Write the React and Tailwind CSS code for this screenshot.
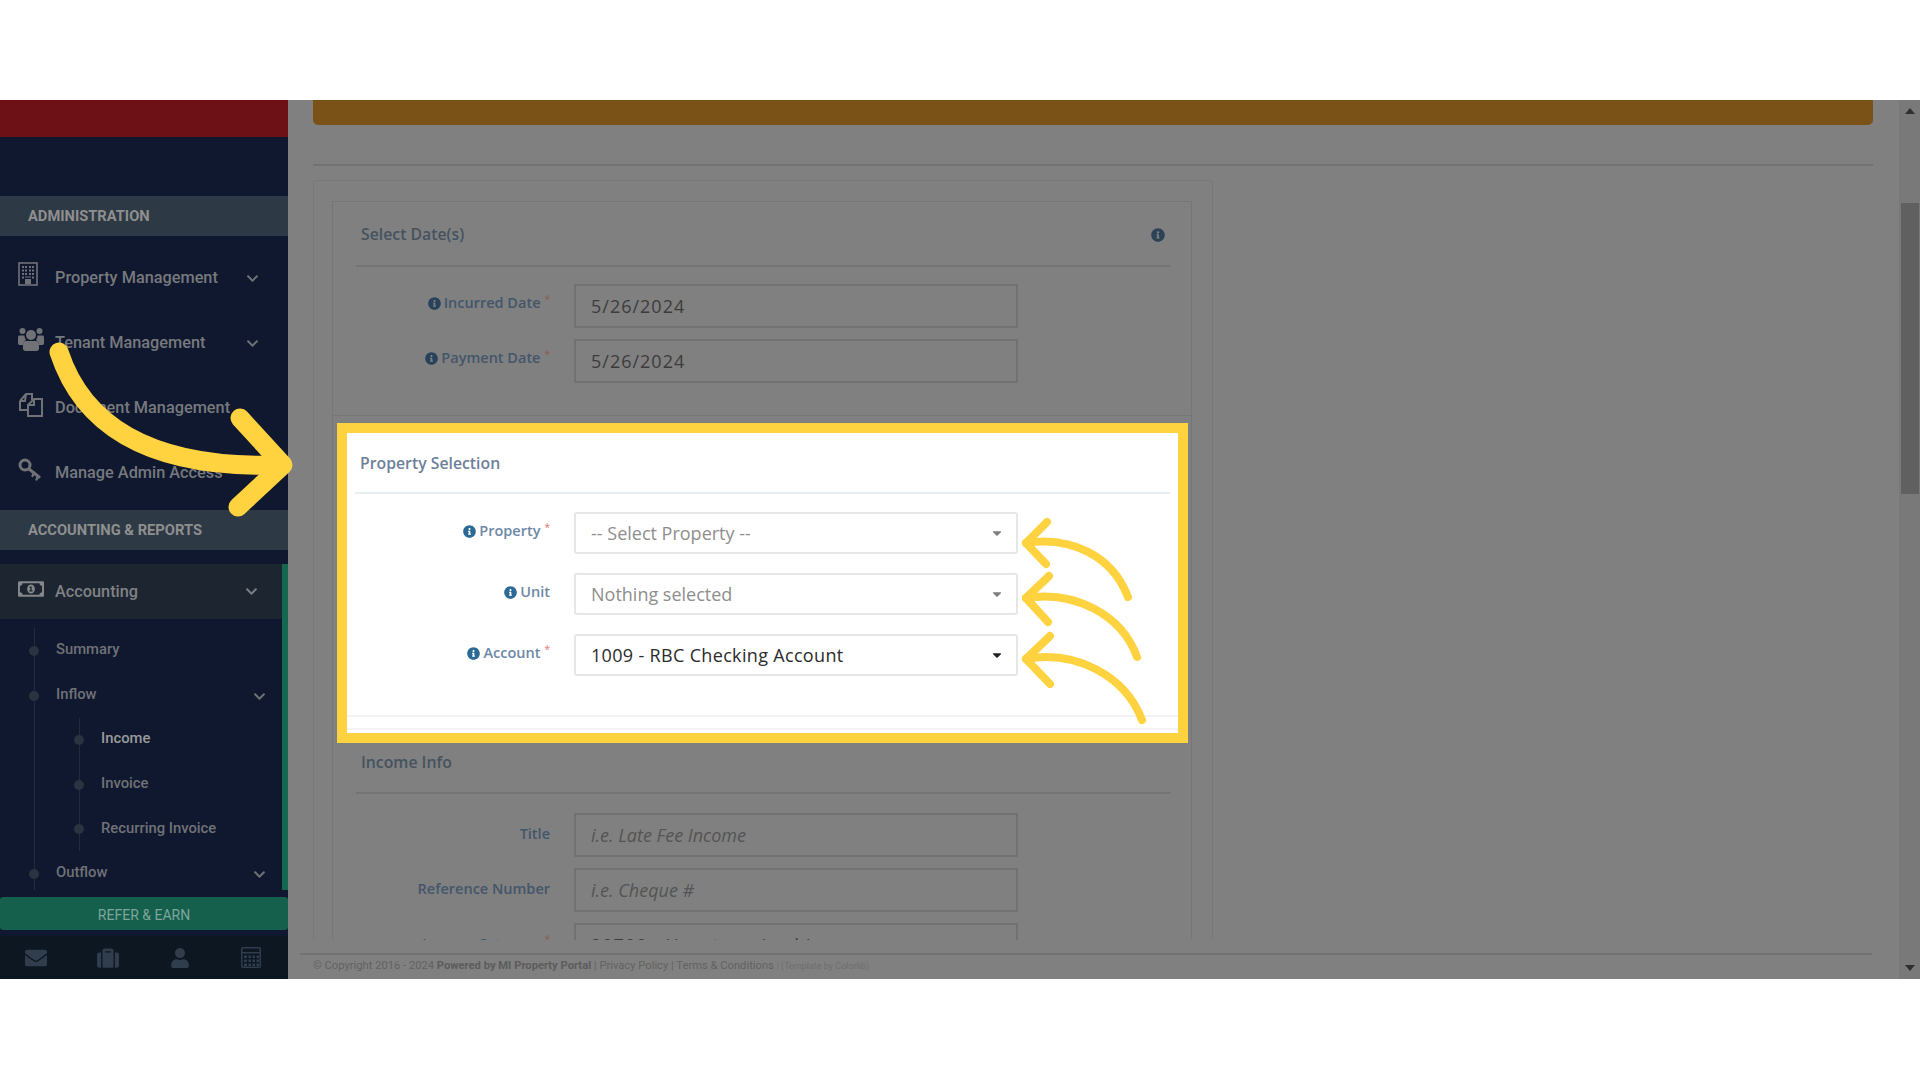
import React from "react";
import {
  FaRegMoneyBillAlt,
  FaChevronDown,
  FaEnvelope,
  FaSuitcase,
  FaUser,
  FaInfoCircle,
  FaCaretDown,
} from "react-icons/fa";

const BuildingIcon = () => (
  <svg width="20" height="24" viewBox="0 0 20 24">
    <rect x="1" y="1" width="18" height="22" fill="none" stroke="currentColor" strokeWidth="1.6" />
    <path d="M4 4h2v2H4zM7 4h2v2H7zM11 4h2v2h-2zM14 4h2v2h-2zM4 7.5h2v2H4zM7 7.5h2v2H7zM11 7.5h2v2h-2zM14 7.5h2v2h-2zM4 11h2v2H4zM7 11h2v2H7zM11 11h2v2h-2zM14 11h2v2h-2zM4 14.5h2v2H4zM14 14.5h2v2h-2zM7 14.5h6v1H7zM7 17h6v5H7z" fill="currentColor" />
  </svg>
);

const UsersIcon = () => (
  <svg width="26" height="25" viewBox="0 0 26 25" fill="currentColor">
    <circle cx="4.5" cy="4" r="3" />
    <circle cx="21.5" cy="4" r="3" />
    <circle cx="13" cy="8" r="5" />
    <path d="M1 8.5h5.5a7 7 0 0 0 1.5 4.5c-2.2 1-3 3-3 5H1.5C.5 18 0 17 0 16v-5c0-1.5.4-2.5 1-2.5zM25 8.5h-5.5a7 7 0 0 1-1.5 4.5c2.2 1 3 3 3 5h3.5c1 0 1.5-1 1.5-2v-5c0-1.5-.4-2.5-1-2.5z" />
    <path d="M7.5 14h11c1.5 0 2.5 1.500 2.500 4v3.500c0 1.500-1 2.500-2.500 2.500h-11C6 24 5 23 5 21.500V18c0-2.500 1-4 2.500-4z" />
  </svg>
);

const FilesIcon = () => (
  <svg width="25" height="25" viewBox="0 0 25 25" fill="none" stroke="currentColor" strokeWidth="2">
    <path d="M2 9 L8 2 H14 V8 M2 9 V18 H9 M2 9 H7 L8 2" />
    <path d="M10 13 L16 7 H24 V24 H10 Z M10 13 H16 V7" />
  </svg>
);

const KeyIcon = () => (
  <svg width="23" height="23" viewBox="0 0 23 23" fill="none" stroke="currentColor" strokeLinecap="round">
    <circle cx="7" cy="7" r="5" strokeWidth="3" />
    <path d="M11 11 L21 19" strokeWidth="3" />
    <path d="M16 15 L14.5 18 M20 18.5 L18.5 21.5" strokeWidth="2.4" />
  </svg>
);

const CalcIcon = () => (
  <svg width="20" height="21" viewBox="0 0 20 21" className="text-[#2f3d4c]">
    <rect x="0.75" y="0.75" width="18.5" height="19.5" rx="1" fill="none" stroke="currentColor" strokeWidth="1.5" />
    <rect x="1" y="5" width="18" height="1.5" fill="currentColor" />
    <path d="M3 8.5h3V11H3zM7.5 8.5H10V11H7.5zM11.5 8.5H14V11h-2.5zM15.5 8.5H18V11h-2.5zM3 12.5h3V15H3zM7.5 12.5H10V15H7.5zM11.5 12.5H14V15h-2.5zM15.5 12.5H18V15h-2.5zM3 16.5h3V19H3zM7.5 16.5H10V19H7.5zM11.5 16.5H14V19h-2.5zM15.5 16.5H18V19h-2.5z" fill="currentColor" />
  </svg>
);

const MenuRow = ({ icon, label, chevron }) => (
  <div className="h-[65px] flex items-center relative pl-[55px] text-[16.3px] font-medium text-[#77797d]">
    <span className="absolute left-[18px] top-[14px] w-[28px] h-[28px] flex items-center text-[#707276]">{icon}</span>
    {label}
    {chevron && <FaChevronDown className="absolute left-[246px] top-[26px] text-[13px] text-[#6e7074]" />}
  </div>
);

const SubRow = ({ label, left, active, chevron }) => (
  <div
    className={`h-[44.6px] flex items-center relative text-[14.8px] font-medium ${active ? "text-[#9a9a9a]" : "text-[#707276]"}`}
    style={{ paddingLeft: left - 1 }}
  >
    <span
      className="absolute top-[19px] w-[10px] h-[10px] rounded-full bg-[#2a3340]"
      style={{ left: left - 28 }}
    />
    {label}
    {chevron && <FaChevronDown className="absolute left-[253px] top-[18px] text-[13px] text-[#6e7074]" />}
  </div>
);

const FormRow = ({ label, info, required, dim, tall, children }) => (
  <div className="flex items-start">
    <div
      className={`w-[194px] ml-[23px] mr-[24px] flex items-center justify-end gap-[3px] text-[14.5px] font-semibold ${tall ? "h-[41px]" : "h-[38px]"} ${dim ? "text-[#43566b]" : "text-[#6d88a6]"}`}
    >
      {info && <FaInfoCircle className={`text-[13px] ${dim ? "text-[#27425a]" : "text-[#2a6a94]"}`} />}
      <span>{label}</span>
      {required && <span className={`text-[10px] -mt-[8px] ml-[1px] font-normal ${dim ? "text-[#8a5a5a]" : "text-[#e2737a]"}`}>*</span>}
    </div>
    {children}
  </div>
);

const DimInput = ({ value, placeholder }) => (
  <div
    className={`w-[444px] h-[44px] border-2 border-[#727272] pl-[15px] flex items-center text-[18px] ${placeholder ? "italic text-[#545454]" : "text-[#3c3c3c] tracking-[1px]"}`}
  >
    {value || placeholder}
  </div>
);

const SelectBox = ({ value, muted }) => (
  <div className={`w-[444px] h-[42px] border-2 border-[#e6e6e6] rounded-[3px] pl-[15px] pr-[12px] flex items-center justify-between text-[18px] ${muted ? "text-[#8e8e8e]" : "text-[#2b2b2b] tracking-[0.33px]"}`}>
    <span>{value}</span>
    <FaCaretDown className={`text-[14px] ${muted ? "text-[#7f7f7f]" : "text-[#222]"}`} />
  </div>
);

export default function App() {
  return (
    <div className="relative w-[1920px] h-[1080px] overflow-hidden bg-white font-['Open_Sans',sans-serif]">
      <div className="h-[100px]" />
      <div className="h-[879px] flex">
        {/* sidebar */}
        <aside className="w-[288px] h-full bg-[#0f182f] flex flex-col font-['Roboto',sans-serif]">
          <div className="h-[37px] bg-[#6e1116]" />
          <div className="h-[59px]" />
          <div className="h-[40px] bg-[#2d3944] flex items-center pl-[28px] text-[14.7px] font-bold text-[#8f8f8f]">ADMINISTRATION</div>
          <div className="mt-[10px]">
            <MenuRow icon={<BuildingIcon />} label="Property Management" chevron />
            <MenuRow icon={<UsersIcon />} label="Tenant Management" chevron />
            <MenuRow icon={<FilesIcon />} label="Document Management" />
            <MenuRow icon={<KeyIcon />} label="Manage Admin Access" />
          </div>
          <div className="mt-[4px] h-[40px] bg-[#2d3944] flex items-center pl-[28px] text-[14.7px] font-bold text-[#8f8f8f]">ACCOUNTING &amp; REPORTS</div>
          <div className="mt-[14px] border-r-[6px] border-[#14684f]">
            <div className="h-[55px] bg-[#1d2530] relative flex items-center pl-[55px] pt-[2px] text-[16.3px] font-medium text-[#808285]">
              <FaRegMoneyBillAlt className="absolute left-[18px] top-[12px] text-[26px] text-[#85878a]" />
              Accounting
              <FaChevronDown className="absolute left-[245px] top-[21px] text-[13px] text-[#7a7c80]" />
            </div>
            <div className="relative h-[271px] pt-[8px]">
              <span className="absolute left-[34px] top-[9px] bottom-0 w-px bg-[#242c3c]" />
              <span className="absolute left-[79px] top-[99px] h-[133px] w-px bg-[#242c3c]" />
              <SubRow label="Summary" left={57} />
              <SubRow label="Inflow" left={57} chevron />
              <SubRow label="Income" left={102} active />
              <SubRow label="Invoice" left={102} />
              <SubRow label="Recurring Invoice" left={102} />
              <SubRow label="Outflow" left={57} chevron />
            </div>
          </div>
          <div className="mt-[7px] h-[33px] rounded-[3px] bg-[#14604d] flex items-center justify-center pt-[3px] text-[14px] text-[#7fa59c]">REFER &amp; EARN</div>
          <div className="mt-[6px] flex-1 bg-[#0d1722] grid grid-cols-4 items-center text-[#2f3d4c]">
            <div className="flex justify-center"><FaEnvelope className="text-[22px]" /></div>
            <div className="flex justify-center"><FaSuitcase className="text-[22px]" /></div>
            <div className="flex justify-center"><FaUser className="text-[20px]" /></div>
            <div className="flex justify-center -ml-[2px]"><CalcIcon /></div>
          </div>
        </aside>

        {/* main */}
        <main className="flex-1 h-full bg-[#808080] flex flex-col min-w-0">
          <div className="h-[840px] overflow-hidden pl-[25px] pr-[26px]">
            <div className="h-[25px] bg-[#7a5218] rounded-b-[5px]" />
            <div className="mt-[39px] h-[2px] bg-[#727272]" />
            <div className="mt-[14px] w-[900px] border border-b-0 border-[#787878] rounded-t-[4px] pt-[20px] pl-[18px] pr-[19px]">
              <div className="w-[860px] border-x border-[#767676]">
                <div className="h-[215px] border-y border-[#767676]">
                  <div className="ml-[23px] mr-[20px] h-[65px] border-b-2 border-[#747474] pt-[2px] pl-[5px] pr-[6px] flex items-center justify-between text-[15.8px] font-semibold text-[#45535f]">
                    <span>Select Date(s)</span>
                    <FaInfoCircle className="text-[14px] text-[#2c4257]" />
                  </div>
                  <div className="mt-[17px] flex flex-col gap-[11px]">
                    <FormRow dim info required label="Incurred Date"><DimInput value="5/26/2024" /></FormRow>
                    <FormRow dim info required label="Payment Date"><DimInput value="5/26/2024" /></FormRow>
                  </div>
                </div>

                <section className="mt-[7px] ml-[4px] mr-[3px] h-[320px] border-[10px] border-[#ffd23f] bg-white">
                  <div className="mx-[8px] h-[61px] border-b-2 border-[#e9eef3] pt-[3px] pl-[5px] flex items-center text-[15.8px] font-semibold text-[#6d7f99]">
                    Property Selection
                  </div>
                  <div className="mt-[18px] -ml-[14px] flex flex-col gap-[19px]">
                    <FormRow info required label="Property"><SelectBox muted value="-- Select Property --" /></FormRow>
                    <FormRow info label="Unit"><SelectBox muted value="Nothing selected" /></FormRow>
                    <FormRow info required label="Account"><SelectBox value="1009 - RBC Checking Account" /></FormRow>
                  </div>
                  <div className="mt-[39px] h-[2px] bg-[#f3f3f3]" />
                  <div className="mt-[11px] h-[2px] bg-[#f3f3f3]" />
                </section>

                <div className="ml-[23px] mr-[20px] h-[51px] border-b-2 border-[#747474] pb-[10px] pl-[5px] flex items-center text-[15.8px] font-semibold text-[#45535f]">
                  Income Info
                </div>
                <div className="mt-[19px] flex flex-col gap-[11px]">
                  <FormRow dim tall label="Title"><DimInput placeholder="i.e. Late Fee Income" /></FormRow>
                  <FormRow dim tall label="Reference Number"><DimInput placeholder="i.e. Cheque #" /></FormRow>
                  <FormRow dim tall required label="Income Category"><DimInput value="20700 - Uncategorized Income" /></FormRow>
                </div>
              </div>
            </div>
          </div>
          <footer className="mt-[13px] ml-[12px] mr-[27px] border-t-2 border-[#727272] pl-[13px] pt-[3px] font-['Roboto',sans-serif] text-[11.2px] text-[#626262] whitespace-nowrap">
            © Copyright 2016 - 2024 <span className="font-bold text-[#5c5c5c]">Powered by MI Property Portal</span> | Privacy Policy | Terms &amp; Conditions <span className="text-[9px] text-[#6e6e6e]">| (Template by Colorlib)</span>
          </footer>
        </main>

        {/* scrollbar */}
        <div className="w-[21px] h-full bg-[#797979] flex flex-col items-center relative">
          <span className="mt-[8px] border-x-[5px] border-b-[6px] border-x-transparent border-b-[#2f2f2f]" />
          <div className="absolute left-[2px] right-[1px] top-[103px] h-[291px] bg-[#606060]" />
          <span className="mt-auto mb-[8px] border-x-[5px] border-t-[6px] border-x-transparent border-t-[#2f2f2f]" />
        </div>
      </div>

      {/* annotation arrows */}
      <svg className="absolute inset-0 pointer-events-none" width="1920" height="1080" fill="none" stroke="#ffd23f" strokeLinecap="round" strokeLinejoin="round">
        <path d="M59 352 C78 410 130 470 280 465" strokeWidth="19" />
        <path d="M240 418 L283 465 L238 507" strokeWidth="19" />
        <path d="M1026 543 C1070 536 1112 555 1128 597" strokeWidth="8" />
        <path d="M1047 522 L1026 543 L1046 564" strokeWidth="8" />
        <path d="M1026 598 C1075 590 1122 615 1137 657" strokeWidth="8" />
        <path d="M1049 576 L1026 598 L1048 622" strokeWidth="8" />
        <path d="M1026 659 C1075 650 1125 675 1142 720" strokeWidth="8" />
        <path d="M1050 636 L1026 659 L1050 684" strokeWidth="8" />
      </svg>
    </div>
  );
}
